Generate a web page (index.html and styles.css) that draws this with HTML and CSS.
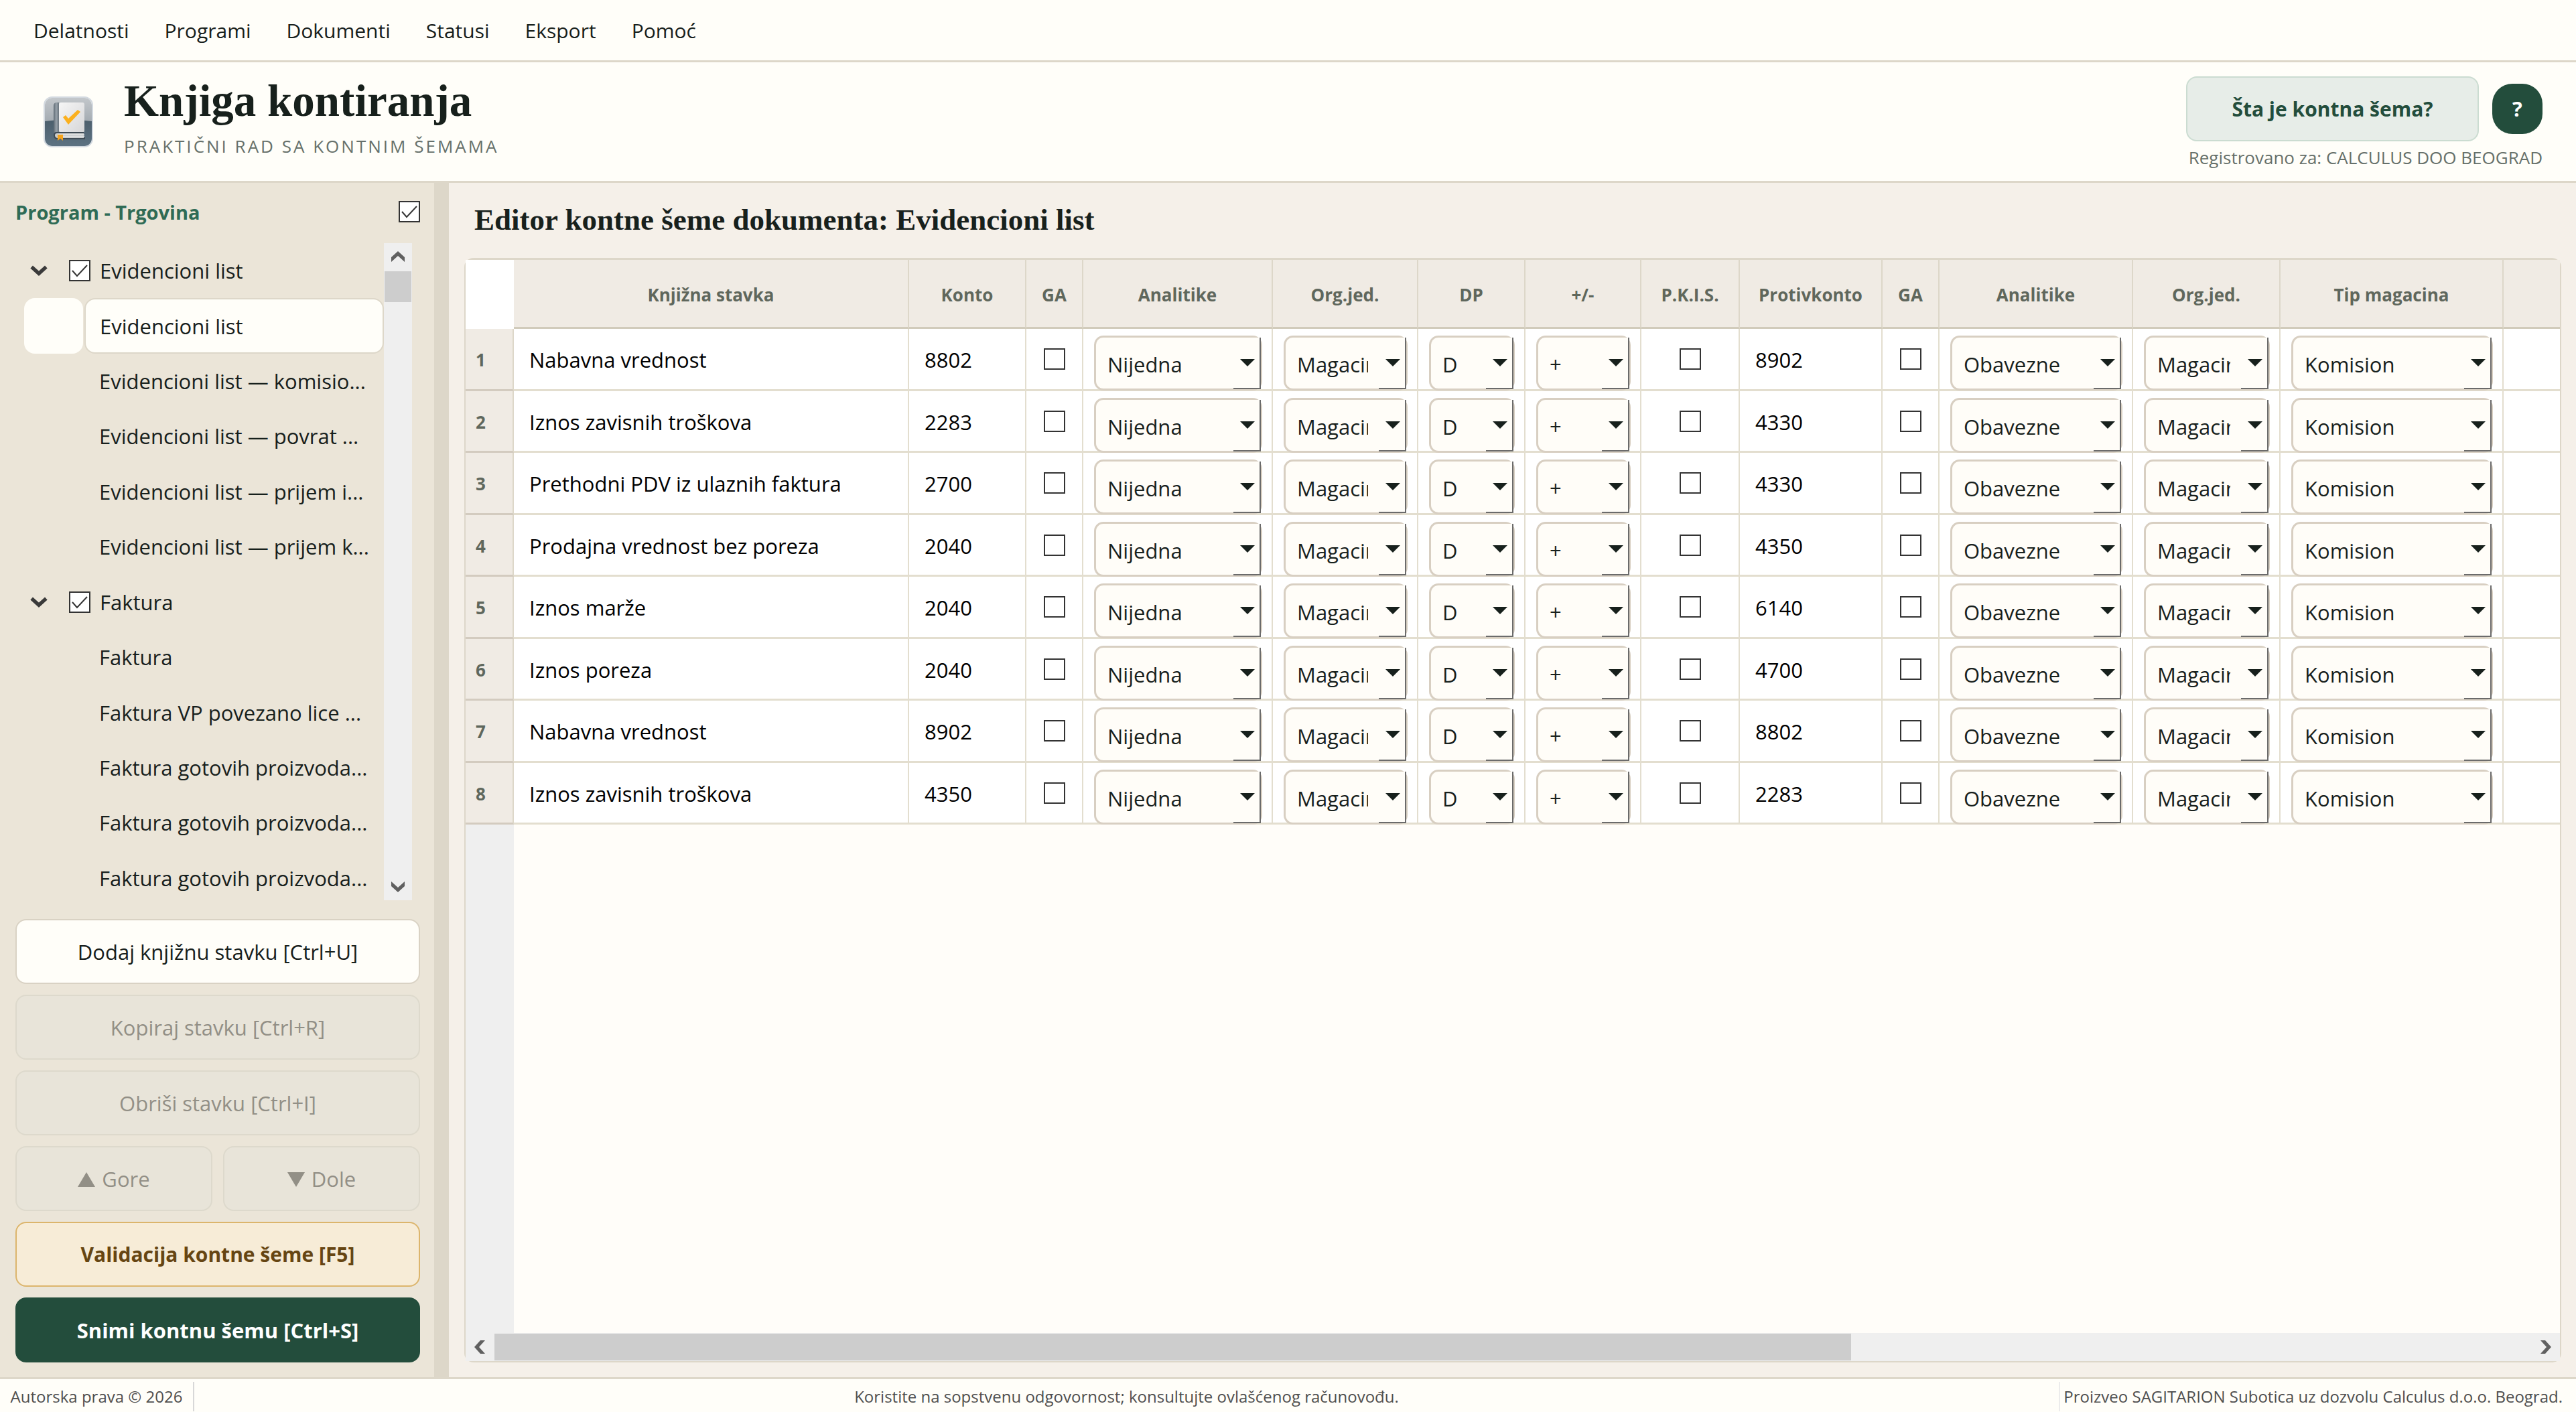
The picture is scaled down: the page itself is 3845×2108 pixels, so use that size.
FILE: index.html
```
<!DOCTYPE html>
<html lang="sr-Latn">
<head>
  <meta charset="UTF-8">
  <meta name="viewport" content="width=device-width, initial-scale=1.0">
  <title>Knjiga kontiranja</title>
  <link rel="stylesheet" href="styles.css">
</head>
<body>
  <nav class="menu">
    <a href="#">Delatnosti</a>
    <a href="#">Programi</a>
    <a href="#">Dokumenti</a>
    <a href="#">Statusi</a>
    <a href="#">Eksport</a>
    <a href="#">Pomoć</a>
  </nav>

  <header class="header">
    <svg class="logo" viewBox="0 0 74 76" aria-hidden="true">
      <defs>
        <linearGradient id="plate" x1="0" y1="0" x2="0" y2="1">
          <stop offset="0" stop-color="#c3c7cb"/>
          <stop offset="1" stop-color="#848f98"/>
        </linearGradient>
        <linearGradient id="plateLow" x1="0" y1="0" x2="0" y2="1">
          <stop offset="0" stop-color="#4c5f6c"/>
          <stop offset="1" stop-color="#5d7282"/>
        </linearGradient>
        <linearGradient id="cover" x1="0" y1="0" x2="1" y2="1">
          <stop offset="0" stop-color="#f6f6f6"/>
          <stop offset="1" stop-color="#d6d6d8"/>
        </linearGradient>
        <linearGradient id="spine" x1="0" y1="0" x2="1" y2="0">
          <stop offset="0" stop-color="#5a6670"/>
          <stop offset=".5" stop-color="#98a2aa"/>
          <stop offset="1" stop-color="#6a757e"/>
        </linearGradient>
      </defs>
      <rect x="2" y="2" width="70" height="72" rx="11" fill="url(#plate)"/>
      <path d="M2 37q35-5 70 0v26q0 11-11 11H13Q2 74 2 63z" fill="url(#plateLow)"/>
      <rect x="1" y="1" width="72" height="74" rx="12" fill="none" stroke="#d3d9e0" stroke-width="2"/>
      <path d="M15 14q0-5 5-5h3v44h-4q-4 0-4 5z" fill="url(#spine)"/>
      <rect x="23" y="9" width="38" height="45" rx="3" fill="url(#cover)"/>
      <path d="M60 54H20q-4 0-4 4t4 5h41v-2" fill="#c9ccce" stroke="#3f4b55" stroke-width="2"/>
      <path d="M22 57h39M22 60h39" stroke="#f0f0f0"/>
      <path d="M21 57h8v9l-4-3-4 3z" fill="#f5a31c"/>
      <path d="M29 31l4-3 4 5 14-13 4 3-18 19z" fill="#fbb01e"/>
    </svg>
    <div class="brand">
      <h1>Knjiga kontiranja</h1>
      <p>PRAKTIČNI RAD SA KONTNIM ŠEMAMA</p>
    </div>
    <div class="header-right">
      <div class="header-buttons">
        <button class="btn-info" type="button">Šta je kontna šema?</button>
        <button class="btn-help" type="button">?</button>
      </div>
      <span class="registered">Registrovano za: CALCULUS DOO BEOGRAD</span>
    </div>
  </header>

  <main class="main">
    <aside class="sidebar">
      <div class="sidebar-head">
        <label for="programAll">Program - Trgovina</label>
        <input type="checkbox" id="programAll" checked>
      </div>

      <div class="tree">
        <ul class="tree-list">
          <li class="group">
            <svg class="chevron" viewBox="0 0 24 16"><path d="M2 3l10 9 10-9"/></svg>
            <input type="checkbox" id="g1" checked><label for="g1">Evidencioni list</label>
          </li>
          <li class="selected"><span>Evidencioni list</span></li>
          <li>Evidencioni list — komisio...</li>
          <li>Evidencioni list — povrat ...</li>
          <li>Evidencioni list — prijem i...</li>
          <li>Evidencioni list — prijem k...</li>
          <li class="group">
            <svg class="chevron" viewBox="0 0 24 16"><path d="M2 3l10 9 10-9"/></svg>
            <input type="checkbox" id="g2" checked><label for="g2">Faktura</label>
          </li>
          <li>Faktura</li>
          <li>Faktura VP povezano lice ...</li>
          <li>Faktura gotovih proizvoda...</li>
          <li>Faktura gotovih proizvoda...</li>
          <li>Faktura gotovih proizvoda...</li>
        </ul>
        <div class="vscroll">
          <svg viewBox="0 0 20 16"><path d="M10 0l10 9v7l-10-9-10 9V9z"/></svg>
          <div class="vthumb"></div>
          <svg viewBox="0 0 20 16"><path d="M10 16L0 7V0l10 9 10-9v7z"/></svg>
        </div>
      </div>

      <div class="actions">
        <button type="button">Dodaj knjižnu stavku [Ctrl+U]</button>
        <button type="button" disabled>Kopiraj stavku [Ctrl+R]</button>
        <button type="button" disabled>Obriši stavku [Ctrl+I]</button>
        <div class="actions-row">
          <button type="button" disabled><svg viewBox="0 0 26 22"><path d="M13 0l13 22H0z"/></svg>Gore</button>
          <button type="button" disabled><svg viewBox="0 0 26 22"><path d="M0 0h26L13 22z"/></svg>Dole</button>
        </div>
        <button type="button" class="validate">Validacija kontne šeme [F5]</button>
        <button type="button" class="save">Snimi kontnu šemu [Ctrl+S]</button>
      </div>
    </aside>

    <section class="editor">
      <h2>Editor kontne šeme dokumenta: Evidencioni list</h2>
      <div class="grid">
        <table>
          <colgroup>
            <col class="c-num"><col class="c-name"><col class="c-konto"><col class="c-ga">
            <col class="c-an"><col class="c-org"><col class="c-dp"><col class="c-sign">
            <col class="c-pkis"><col class="c-pk"><col class="c-ga"><col class="c-an2">
            <col class="c-org2"><col class="c-tip"><col>
          </colgroup>
          <thead>
            <tr>
              <td></td><th>Knjižna stavka</th><th>Konto</th><th>GA</th><th>Analitike</th>
              <th>Org.jed.</th><th>DP</th><th>+/-</th><th>P.K.I.S.</th><th>Protivkonto</th>
              <th>GA</th><th>Analitike</th><th>Org.jed.</th><th>Tip magacina</th><th></th>
            </tr>
          </thead>
          <tbody id="rows"></tbody>
        </table>
        <div class="grid-rest"></div>
        <div class="hscroll">
          <svg viewBox="0 0 16 20"><path d="M0 10L9 0h7L7 10l9 10H9z"/></svg>
          <div class="htrack"><div class="hthumb"></div></div>
          <svg viewBox="0 0 16 20"><path d="M16 10L7 0H0l9 10-9 10h7z"/></svg>
        </div>
      </div>
    </section>
  </main>

  <footer class="footer">
    <span class="copy">Autorska prava © 2026</span>
    <span class="notice">Koristite na sopstvenu odgovornost; konsultujte ovlašćenog računovođu.</span>
    <span class="maker">Proizveo SAGITARION Subotica uz dozvolu Calculus d.o.o. Beograd.</span>
  </footer>

  <script>
    const rows = [
      ['Nabavna vrednost', '8802', '8902'],
      ['Iznos zavisnih troškova', '2283', '4330'],
      ['Prethodni PDV iz ulaznih faktura', '2700', '4330'],
      ['Prodajna vrednost bez poreza', '2040', '4350'],
      ['Iznos marže', '2040', '6140'],
      ['Iznos poreza', '2040', '4700'],
      ['Nabavna vrednost', '8902', '8802'],
      ['Iznos zavisnih troškova', '4350', '2283']
    ];

    const combo = (label, value) =>
      `<td class="cell-combo"><div class="combo"><select aria-label="${label}"><option>${value}</option></select></div></td>`;
    const check = (label) =>
      `<td class="cell-check"><input type="checkbox" aria-label="${label}"></td>`;

    document.getElementById('rows').innerHTML = rows.map(([name, konto, protiv], i) => `
      <tr>
        <th scope="row">${i + 1}</th>
        <td>${name}</td>
        <td>${konto}</td>
        ${check('GA')}
        ${combo('Analitike', 'Nijedna')}
        ${combo('Org.jed.', 'Magacin')}
        ${combo('DP', 'D')}
        ${combo('+/-', '+')}
        ${check('P.K.I.S.')}
        <td>${protiv}</td>
        ${check('GA protivkonta')}
        ${combo('Analitike protivkonta', 'Obavezne')}
        ${combo('Org.jed. protivkonta', 'Magacin')}
        ${combo('Tip magacina', 'Komision')}
        <td></td>
      </tr>`).join('');
  </script>
</body>
</html>
```
FILE: styles.css
```
:root {
  --ink: #17201c;
  --muted: #66706a;
  --green: #234d3c;
  --paper: #fffef9;
  --sand: #ebe5d8;
  --line: #ddd7c9;
}

* {
  box-sizing: border-box;
}

body {
  margin: 0;
  height: 100vh;
  display: flex;
  flex-direction: column;
  overflow: hidden;
  font-family: "Open Sans", "Noto Sans", sans-serif;
  font-size: 31px;
  color: var(--ink);
  background: #f5f0e9;
}

button,
select {
  font: inherit;
  color: inherit;
}

h1,
h2 {
  margin: 0;
  font-family: "Liberation Serif", serif;
  font-weight: bold;
}

/* top menu */
.menu {
  display: flex;
  align-items: center;
  gap: 53px;
  height: 93px;
  padding: 0 50px;
  background: var(--paper);
  border-bottom: 3px solid var(--line);
  font-size: 30px;
}

.menu a {
  color: inherit;
  text-decoration: none;
}

/* header */
.header {
  display: flex;
  align-items: center;
  height: 180px;
  padding: 0 50px 0 65px;
  background: var(--paper);
  border-bottom: 3px solid var(--line);
}

.logo {
  width: 74px;
  height: 76px;
}

.brand {
  margin-left: 46px;
  padding-bottom: 16px;
}

.brand h1 {
  font-size: 67px;
  line-height: 76px;
}

.brand p {
  margin: 12px 0 0;
  font-size: 26px;
  line-height: 36px;
  letter-spacing: 3px;
  color: var(--muted);
}

.header-right {
  margin-left: auto;
  padding-top: 3px;
  display: flex;
  flex-direction: column;
  align-items: flex-end;
}

.header-buttons {
  display: flex;
  align-items: center;
  gap: 20px;
}

.btn-info {
  width: 437px;
  height: 97px;
  border: 2px solid #cbdcd1;
  border-radius: 16px;
  background: #e7ede8;
  color: var(--green);
  font-size: 30px;
  font-weight: bold;
}

.btn-help {
  width: 75px;
  height: 75px;
  padding: 0;
  border: 0;
  border-radius: 30px;
  background: var(--green);
  color: #fff;
  font-weight: bold;
}

.registered {
  margin-top: 6px;
  font-size: 26px;
  line-height: 36px;
  color: var(--muted);
}

/* layout */
.main {
  flex: 1;
  min-height: 0;
  display: flex;
}

.sidebar {
  width: 670px;
  flex: none;
  display: flex;
  flex-direction: column;
  padding: 22px 21px 22px 23px;
  background: var(--sand);
  border-right: 22px solid var(--line);
}

.sidebar-head {
  display: flex;
  align-items: center;
  justify-content: space-between;
  height: 68px;
  padding-bottom: 26px;
  font-size: 29px;
  font-weight: bold;
  color: #2f6b55;
}

input[type="checkbox"] {
  appearance: none;
  flex: none;
  width: 32px;
  height: 32px;
  margin: 0;
  border: 2px solid #333;
  background: #fff;
}

input[type="checkbox"]:checked {
  background: #fff url('data:image/svg+xml,<svg xmlns="http://www.w3.org/2000/svg" viewBox="0 0 28 28"><path d="M3 14l7 8L25 6" fill="none" stroke="%23333" stroke-width="2"/></svg>') center / 28px 28px no-repeat;
}

/* document tree */
.tree {
  flex: 1;
  min-height: 0;
  display: flex;
  margin-right: 12px;
  overflow: hidden;
}

.tree-list {
  flex: 1;
  height: calc(100% + 8px);
  margin: 0;
  padding: 0;
  display: grid;
  grid-template-rows: repeat(12, 1fr);
  list-style: none;
  white-space: nowrap;
}

.tree-list li {
  display: flex;
  align-items: center;
  padding-left: 125px;
}

.tree-list .group {
  padding-left: 22px;
}

.chevron {
  width: 26px;
  height: 18px;
  margin-right: 32px;
  fill: none;
  stroke: #3a3a3a;
  stroke-width: 5;
}

.group label {
  margin-left: 14px;
}

.tree-list .selected {
  padding-left: 13px;
  gap: 2px;
  align-items: stretch;
}

.selected::before {
  content: "";
  width: 88px;
  border-radius: 16px;
  background: var(--paper);
}

.selected span {
  flex: 1;
  display: flex;
  align-items: center;
  padding-left: 21px;
  border: 2px solid var(--line);
  border-radius: 16px;
  background: var(--paper);
}

.vscroll {
  width: 42px;
  display: flex;
  flex-direction: column;
  align-items: center;
  justify-content: space-between;
  padding: 12px 0;
  background: #efefef;
}

.vscroll svg {
  width: 20px;
  height: 16px;
  fill: #606060;
}

.vthumb {
  width: 40px;
  height: 46px;
  margin: 14px 0 auto;
  background: #cdcdcd;
}

/* sidebar buttons */
.actions {
  display: flex;
  flex-direction: column;
  gap: 16px;
  margin-top: 28px;
}

.actions-row {
  display: flex;
  gap: 16px;
}

.actions button {
  flex: 1 0 auto;
  height: 97px;
  border: 2px solid #d9d2c4;
  border-radius: 16px;
  background: var(--paper);
}

.actions button:disabled {
  background: #e8e4d9;
  border-color: #ddd9cc;
  color: #928f86;
}

.actions-row button {
  flex: 1 1 0;
}

.actions-row svg {
  width: 26px;
  height: 22px;
  margin-right: 10px;
  fill: currentColor;
}

.actions .validate {
  background: #f7ecd7;
  border-color: #dcb56c;
  color: #664512;
  font-size: 30px;
  font-weight: bold;
}

.actions .save {
  background: var(--green);
  border-color: var(--green);
  color: #fff;
  font-weight: bold;
}

/* editor */
.editor {
  flex: 1;
  min-width: 0;
  display: flex;
  flex-direction: column;
  padding: 30px 22px 22px 23px;
}

.editor h2 {
  padding-left: 15px;
  font-size: 45px;
  line-height: 50px;
}

.grid {
  flex: 1;
  min-height: 0;
  display: flex;
  flex-direction: column;
  margin-top: 32px;
  border: 2px solid var(--line);
  border-top-width: 3px;
  border-radius: 14px;
  background: #fffdf9;
}

table {
  width: 100%;
  table-layout: fixed;
  border-collapse: separate;
  border-spacing: 0;
  color: #000;
}

.c-num { width: 72px; }
.c-name { width: 590px; }
.c-konto { width: 175px; }
.c-ga { width: 85px; }
.c-an { width: 283px; }
.c-org { width: 217px; }
.c-dp { width: 160px; }
.c-sign { width: 173px; }
.c-pkis { width: 147px; }
.c-pk { width: 213px; }
.c-an2 { width: 289px; }
.c-org2 { width: 220px; }
.c-tip { width: 333px; }

th {
  font-size: 26px;
  color: #5f675c;
  background: #f0ebe4;
}

thead th {
  height: 103px;
  padding: 3px 0 0;
  border-right: 2px solid var(--line);
  border-bottom: 3px solid #d1cbbb;
}

thead td {
  background: #fff;
}

tbody th {
  padding: 2px 0 0 15px;
  text-align: left;
  border-right: 2px solid var(--line);
  border-bottom: 3px solid #d3cbbf;
}

tbody td {
  height: 92px;
  padding: 2px 0 0 23px;
  background: #fff;
  border-right: 2px solid #e3decf;
  border-bottom: 3px solid #e3decf;
}

tbody tr:nth-child(odd) td {
  height: 93px;
}

thead th:last-child,
tbody td:last-child {
  border-right: 0;
}

tbody .cell-check {
  padding: 0;
  text-align: center;
}

.cell-check input {
  display: block;
  margin: 0 auto;
}

tbody .cell-combo {
  padding: 0 14px 0 16px;
  vertical-align: top;
}

.combo {
  position: relative;
  height: 82px;
  margin: 10px 0 -3px;
}

.combo select {
  appearance: none;
  width: 100%;
  height: 100%;
  padding: 4px 56px 0 17px;
  border: 3px solid #d8cfc2;
  border-radius: 14px;
  outline: 0;
  background: #fffdf8;
  color: var(--ink);
}

/* raised drop-down part */
.combo::before {
  content: "";
  position: absolute;
  top: 3px;
  right: 2px;
  bottom: 2px;
  width: 39px;
  border-right: 2px solid #6b6b6b;
  border-bottom: 2px solid #6b6b6b;
  background: #fffdf8;
}

.combo::after {
  content: "";
  position: absolute;
  top: 35px;
  right: 11px;
  border: 11px solid transparent;
  border-top-color: var(--ink);
  border-bottom: 0;
}

.grid-rest {
  flex: 1;
  width: 72px;
  background: #efefef;
}

.hscroll {
  display: flex;
  align-items: center;
  height: 42px;
  padding: 0 13px;
  background: #efefef;
}

.hscroll svg {
  width: 16px;
  height: 20px;
  fill: #606060;
}

.htrack {
  flex: 1;
  margin: 0 14px;
}

.hthumb {
  width: 66.6%;
  height: 40px;
  background: #cdcdcd;
}

/* status bar */
.footer {
  display: grid;
  grid-template-columns: 290px 1fr 772px;
  align-items: center;
  height: 52px;
  padding-top: 2px;
  border-top: 3px solid var(--line);
  background: var(--paper);
  font-size: 24px;
  line-height: 44px;
  white-space: nowrap;
  color: #4f4f4f;
  text-align: center;
}

.copy {
  border-right: 2px solid #d8d8d8;
}

.maker {
  padding-right: 20px;
  border-left: 2px solid #ececec;
  text-align: right;
}
```
